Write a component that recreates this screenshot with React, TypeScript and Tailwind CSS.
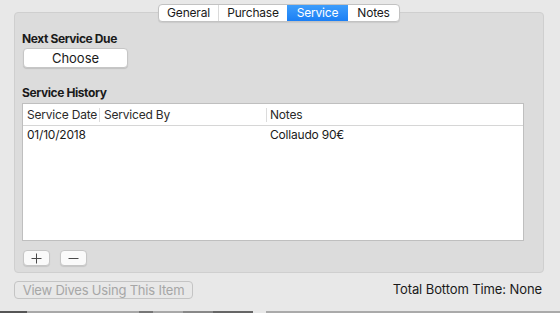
import React from "react";

const font = { fontFamily: "Inter, 'Liberation Sans', sans-serif" };

export default function App() {
  return (
    <div className="relative w-[560px] h-[313px] bg-[#e8e8e8] overflow-hidden text-[#1a1a1a]" style={font}>
      <div className="pt-[12px] pl-[14px]">
        <div className="w-[530px] h-[261px] bg-[#dcdcdc] border border-[#cfcfcf] rounded-[4px] pl-[7px] pr-[19px] pt-[18px] flex flex-col">
          <div className="text-[12px] font-bold leading-[15px] tracking-[-0.4px] whitespace-nowrap">Next Service Due</div>
          <button className="mt-[2px] ml-[1px] w-[105px] h-[20px] bg-white border border-[#c6c6c6] rounded-[4px] shadow-[0_1px_1px_rgba(0,0,0,0.12)] text-[13px] leading-[18px] text-[#1a1a1a]">
            Choose
          </button>
          <div className="mt-[17px] text-[12px] font-bold leading-[15px] tracking-[-0.4px] whitespace-nowrap">Service History</div>
          <div className="mt-[3px] w-[502px] h-[138px] bg-white border border-[#bfbfbf] flex flex-col">
            <div className="h-[22px] border-b border-[#d6d6d6] flex items-center text-[12px] text-[#2a2a2a] tracking-[-0.2px] whitespace-nowrap">
              <div className="w-[77px] pl-[4px] border-r border-[#dcdcdc] h-[14px] leading-[14px]">Service Date</div>
              <div className="w-[167px] pl-[4px] border-r border-[#dcdcdc] h-[14px] leading-[14px]">Serviced By</div>
              <div className="pl-[3px] leading-[14px]">Notes</div>
            </div>
            <div className="h-[17px] flex items-center text-[12px] tracking-[-0.2px] whitespace-nowrap">
              <div className="w-[77px] pl-[4px]">01/10/2018</div>
              <div className="w-[167px]"></div>
              <div className="pl-[3px]">Collaudo 90€</div>
            </div>
          </div>
          <div className="mt-[9px] ml-[1px] flex gap-[10px]">
            <button className="w-[27px] h-[16px] bg-[#fafafa] border border-[#c6c6c6] rounded-[4px] shadow-[0_1px_1px_rgba(0,0,0,0.1)] flex items-center justify-center">
              <svg width="11" height="11" viewBox="0 0 11 11"><path d="M5.5 0.5V10.5M0.5 5.5H10.5" stroke="#4a4a4a" strokeWidth="1" /></svg>
            </button>
            <button className="w-[27px] h-[16px] bg-[#fafafa] border border-[#c6c6c6] rounded-[4px] shadow-[0_1px_1px_rgba(0,0,0,0.1)] flex items-center justify-center">
              <svg width="11" height="11" viewBox="0 0 11 11"><path d="M0.5 5.5H10.5" stroke="#4a4a4a" strokeWidth="1" /></svg>
            </button>
          </div>
        </div>
      </div>

      <div className="mt-[7px] pl-[14px] pr-[18px] flex items-center justify-between">
        <button className="w-[179px] h-[18px] border border-[#c4c4c4] rounded-[4px] text-[13px] leading-[16px] text-[#a6a6a6] tracking-[-0.2px] whitespace-nowrap">
          View Dives Using This Item
        </button>
        <div className="text-[13px] text-[#1a1a1a] tracking-[-0.1px] whitespace-nowrap">Total Bottom Time: None</div>
      </div>

      {/* Segmented tabs overlaying panel border */}
      <div className="absolute left-[158px] top-[4px] h-[18px] flex bg-white border border-[#c2c2c2] rounded-[4px] overflow-hidden shadow-[0_1px_1px_rgba(0,0,0,0.08)] text-[12px] leading-[16px] tracking-[-0.2px] whitespace-nowrap">
        <div className="w-[60px] text-center border-r border-[#dadada]">General</div>
        <div className="w-[68px] text-center">Purchase</div>
        <div className="w-[61px] text-center text-white bg-gradient-to-b from-[#3d9dfb] to-[#1a7ff5]">Service</div>
        <div className="w-[51px] text-center">Notes</div>
      </div>

      {/* bottom edge strip */}
      <div className="absolute left-0 bottom-0 w-[560px] h-[2px] flex">
        <div className="w-[27px] bg-[#555]"></div>
        <div className="w-[112px] bg-[#a8a8a8]"></div>
        <div className="w-[14px] bg-[#777]"></div>
        <div className="w-[30px] bg-[#a8a8a8]"></div>
        <div className="w-[30px] bg-[#888]"></div>
        <div className="w-[40px] bg-[#666]"></div>
        <div className="w-[13px] bg-[#e8e8e8]"></div>
        <div className="flex-1 bg-[#aaaaaa]"></div>
      </div>
    </div>
  );
}
